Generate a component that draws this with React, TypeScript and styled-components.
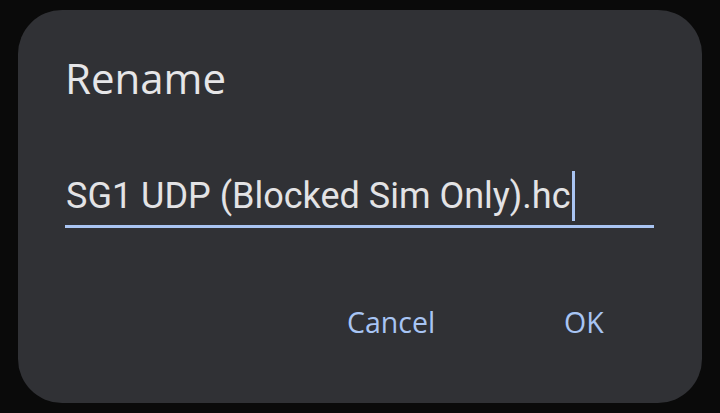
import React from "react";
import styled, { createGlobalStyle } from "styled-components";

const Global = createGlobalStyle`
  html, body { margin: 0; padding: 0; background: #0a0a0a; }
  body { width: 720px; height: 413px; overflow: hidden; }
`;

const Screen = styled.div`
  box-sizing: border-box;
  width: 720px;
  height: 413px;
  padding: 10px 18px 10px 18px;
  background: #0a0a0a;
`;

const Dialog = styled.div`
  box-sizing: border-box;
  width: 684px;
  height: 393px;
  border-radius: 44px;
  background: #303135;
  display: flex;
  flex-direction: column;
  padding: 42px 48px 0 47px;
`;

const Title = styled.h1`
  margin: 0;
  font-family: "Open Sans", sans-serif;
  font-weight: 400;
  font-size: 42px;
  line-height: 52px;
  color: #e6e6e8;
`;

const Field = styled.div`
  margin-top: 62px;
  display: flex;
  align-items: center;
  height: 59px;
  border-bottom: 3px solid #a9c4f2;
  padding-left: 1px;
`;

const Value = styled.span`
  font-family: Roboto, sans-serif;
  font-size: 36px;
  color: #e3e3e5;
  white-space: nowrap;
`;

const Caret = styled.span`
  display: inline-block;
  width: 3px;
  height: 50px;
  margin-left: 1px;
  background: #a9c4f2;
`;

const Actions = styled.div`
  display: flex;
  justify-content: flex-end;
  margin-top: 75px;
  padding-right: 50px;
`;

const Action = styled.button<{ $w: number }>`
  background: none;
  border: none;
  padding: 0;
  width: ${(p) => p.$w}px;
  text-align: left;
  font-family: "Open Sans", sans-serif;
  font-weight: 500;
  font-size: 28.5px;
  color: #a8c5f4;
`;

export default function App() {
  return (
    <>
      <Global />
      <Screen>
        <Dialog>
          <Title>Rename</Title>
          <Field>
            <Value>SG1 UDP (Blocked Sim Only).hc</Value>
            <Caret />
          </Field>
          <Actions>
            <Action $w={217}>Cancel</Action>
            <Action $w={40}>OK</Action>
          </Actions>
        </Dialog>
      </Screen>
    </>
  );
}
